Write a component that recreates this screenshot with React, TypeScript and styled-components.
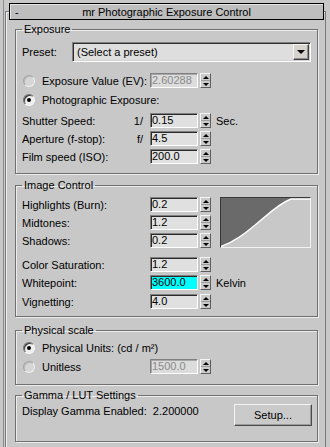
import React from 'react';
import styled, { createGlobalStyle } from 'styled-components';

const GlobalStyle = createGlobalStyle`
  html, body {
    margin: 0;
    padding: 0;
    background: #c8c8c8;
  }
  body {
    font-family: "Liberation Sans", Arial, sans-serif;
    font-size: 11px;
    color: #000;
  }
`;

const Page = styled.div`
  width: 330px;
  height: 447px;
  overflow: hidden;
  box-sizing: border-box;
  background: #c8c8c8;
  padding: 11px 4px 0 5px;
  box-shadow: inset 3px 0 0 #c8c8c8, inset 4px 0 0 #8c8c8c;
`;

const Rollout = styled.div`
  height: 436px;
  box-sizing: border-box;
  border: 1px solid #7a7a7a;
  border-bottom: none;
  box-shadow: inset 1px 1px 0 #eeeeee;
`;

const TitleBar = styled.div`
  margin: -9px 1px 0 3px;
  height: 17px;
  box-sizing: border-box;
  border: 1px solid #000;
  background: #bebebe;
  box-shadow: inset 1px 1px 0 #e4e4e4;
  display: grid;
  grid-template-columns: 24px 1fr 24px;
  align-items: center;
  line-height: 14px;
`;

const Collapse = styled.span`
  padding-left: 5px;
`;

const TitleText = styled.span`
  text-align: center;
`;

const Group = styled.fieldset<{ $mt: number; $pt: number; $pb: number }>`
  margin: ${p => p.$mt}px 7px 0 9px;
  padding: ${p => p.$pt}px 6px ${p => p.$pb}px 6px;
  border: 1px solid #707070;
  box-shadow: inset 1px 1px 0 #ececec, 1px 1px 0 #ececec;
  min-inline-size: 0;
`;

const Legend = styled.legend`
  padding: 0 2px;
  line-height: 14px;
  font-size: 11px;
`;

const Row = styled.div<{ $mt?: number; $h?: number }>`
  display: flex;
  align-items: center;
  height: ${p => p.$h ?? 17}px;
  margin-top: ${p => p.$mt ?? 0}px;
  line-height: 14px;
  white-space: pre;
`;

const PresetLabel = styled.span`
  width: 50px;
  flex: none;
`;

const Select = styled.div`
  flex: 1;
  height: 20px;
  box-sizing: border-box;
  display: flex;
  align-items: center;
  padding: 0 1px 0 3px;
  border: 1px solid;
  border-color: #808080 #ffffff #ffffff #808080;
  box-shadow: inset 1px 1px 0 #2e2e2e, inset -1px -1px 0 #d4d4d4;
  background: #dedede;
`;

const SelectText = styled.span`
  flex: 1;
  padding-left: 1px;
`;

const ArrowButton = styled.span`
  width: 16px;
  height: 16px;
  box-sizing: border-box;
  display: flex;
  align-items: center;
  justify-content: center;
  background: #d6d3cd;
  border: 1px solid;
  border-color: #f6f6f6 #404040 #404040 #f6f6f6;
  box-shadow: inset -1px -1px 0 #8e8e8e;
  &::after {
    content: '';
    border-left: 4px solid transparent;
    border-right: 4px solid transparent;
    border-top: 4px solid #000;
  }
`;

const Label = styled.span`
  width: 128px;
  flex: none;
  display: flex;
  align-items: center;
`;

const Prefix = styled.span`
  margin-left: auto;
  padding-right: 7px;
`;

const Radio = styled.span<{ $checked?: boolean }>`
  width: 12px;
  height: 12px;
  flex: none;
  margin: 0 7px 0 1px;
  border-radius: 50%;
  box-sizing: border-box;
  display: flex;
  align-items: center;
  justify-content: center;
  border: 1px solid;
  border-color: ${p => (p.$checked ? '#6e6e6e #f6f6f6 #f6f6f6 #6e6e6e' : '#a4a4a4 #f0f0f0 #f0f0f0 #a4a4a4')};
  background: ${p => (p.$checked ? '#efefef' : '#d6d6d6')};
  box-shadow: inset 1px 1px 0 ${p => (p.$checked ? '#333333' : '#bcbcbc')};
  &::after {
    content: '';
    display: ${p => (p.$checked ? 'block' : 'none')};
    width: 4px;
    height: 4px;
    border-radius: 50%;
    background: #000;
  }
`;

const Field = styled.span<{ $disabled?: boolean; $bg?: string }>`
  width: 48px;
  height: 15px;
  flex: none;
  box-sizing: border-box;
  padding-left: 1px;
  line-height: 13px;
  border: 1px solid;
  border-color: #808080 #ffffff #ffffff #808080;
  box-shadow: inset 1px 1px 0 ${p => (p.$disabled ? '#a8a8a8' : '#2a2a2a')};
  background: ${p => p.$bg ?? (p.$disabled ? '#dcdcdc' : '#e0e0e0')};
  color: ${p => (p.$disabled ? '#8a8a8a' : '#000')};
  overflow: hidden;
`;

const Spin = styled.span`
  width: 11px;
  height: 15px;
  flex: none;
  margin-left: 2px;
  box-sizing: border-box;
  display: flex;
  flex-direction: column;
  border: 1px solid;
  border-color: #f6f6f6 #5e5e5e #5e5e5e #f6f6f6;
  background: #cbcbcb;
`;

const SpinHalf = styled.span<{ $down?: boolean }>`
  flex: 1;
  display: flex;
  align-items: center;
  justify-content: center;
  border-top: ${p => (p.$down ? '1px solid #9c9c9c' : 'none')};
  &::after {
    content: '';
    border-left: 3px solid transparent;
    border-right: 3px solid transparent;
    ${p => (p.$down ? 'border-top: 3px solid #000;' : 'border-bottom: 3px solid #000;')}
  }
`;

const Unit = styled.span`
  margin-left: 5px;
`;

const ToneBlock = styled.div`
  display: flex;
  align-items: flex-start;
`;

const ToneRows = styled.div`
  display: flex;
  flex-direction: column;
`;

const Curve = styled.div`
  width: 91px;
  height: 51px;
  margin: 1px 0 0 9px;
  box-sizing: border-box;
  border: 1px solid;
  border-color: #383838 #f2f2f2 #f2f2f2 #383838;
  background: #c8c8c8;
  svg {
    display: block;
  }
`;

const GammaRow = styled.div`
  display: flex;
  align-items: flex-start;
  line-height: 14px;
  white-space: pre;
`;

const Button = styled.span`
  margin-left: auto;
  margin-right: -1px;
  width: 78px;
  height: 22px;
  box-sizing: border-box;
  display: flex;
  align-items: center;
  justify-content: center;
  border: 1px solid;
  border-color: #f4f4f4 #4a4a4a #4a4a4a #f4f4f4;
  box-shadow: inset -1px -1px 0 #9a9a9a;
  background: #cacaca;
`;

const Spinner = () => (
  <Spin>
    <SpinHalf />
    <SpinHalf $down />
  </Spin>
);

type ParamProps = {
  label: string;
  value: string;
  prefix?: string;
  unit?: string;
  mt?: number;
  bg?: string;
};

const Param = ({ label, value, prefix, unit, mt, bg }: ParamProps) => (
  <Row $mt={mt}>
    <Label>
      {label}
      {prefix && <Prefix>{prefix}</Prefix>}
    </Label>
    <Field $bg={bg}>{value}</Field>
    <Spinner />
    {unit && <Unit>{unit}</Unit>}
  </Row>
);

const ToneCurve = () => (
  <Curve>
    <svg width="89" height="49" viewBox="0 0 89 49">
      <path d="M0,0 L0,49 C14,44 24,36 36,26 C48,16 58,6 70,1 L89,1 L89,0 Z" fill="#6a6a6a" />
      <path d="M0,48.5 C14,43.5 24,35.5 36,25.5 C48,15.5 58,5.5 70,1 L89,1" fill="none" stroke="#ffffff" strokeWidth="1.6" />
    </svg>
  </Curve>
);

export default function App() {
  return (
    <>
      <GlobalStyle />
      <Page>
        <Rollout>
          <TitleBar>
            <Collapse>-</Collapse>
            <TitleText>mr Photographic Exposure Control</TitleText>
            <span />
          </TitleBar>

          <Group $mt={2} $pt={6} $pb={8}>
            <Legend>Exposure</Legend>
            <Row $h={20}>
              <PresetLabel>Preset:</PresetLabel>
              <Select>
                <SelectText>(Select a preset)</SelectText>
                <ArrowButton />
              </Select>
            </Row>
            <Row $mt={10}>
              <Label>
                <Radio />
                Exposure Value (EV):
              </Label>
              <Field $disabled>2.60288</Field>
              <Spinner />
            </Row>
            <Row $mt={2}>
              <Radio $checked />
              Photographic Exposure:
            </Row>
            <Param mt={4} label="Shutter Speed:" prefix="1/" value="0.15" unit="Sec." />
            <Param mt={1} label="Aperture (f-stop):" prefix="f/" value="4.5" />
            <Param mt={1} label="Film speed (ISO):" value="200.0" />
          </Group>

          <Group $mt={4} $pt={4} $pb={6}>
            <Legend>Image Control</Legend>
            <ToneBlock>
              <ToneRows>
                <Param label="Highlights (Burn):" value="0.2" />
                <Param mt={1} label="Midtones:" value="1.2" />
                <Param mt={1} label="Shadows:" value="0.2" />
              </ToneRows>
              <ToneCurve />
            </ToneBlock>
            <Param mt={7} label="Color Saturation:" value="1.2" />
            <Param mt={1} label="Whitepoint:" value="3600.0" unit="Kelvin" bg="#00ffff" />
            <Param mt={2} label="Vignetting:" value="4.0" />
          </Group>

          <Group $mt={6} $pt={2} $pb={9}>
            <Legend>Physical scale</Legend>
            <Row>
              <Radio $checked />
              Physical Units: (cd / m²)
            </Row>
            <Row $mt={2}>
              <Label>
                <Radio />
                Unitless
              </Label>
              <Field $disabled>1500.0</Field>
              <Spinner />
            </Row>
          </Group>

          <Group $mt={3} $pt={2} $pb={15}>
            <Legend>Gamma / LUT Settings</Legend>
            <GammaRow>
              <span>Display Gamma Enabled:  2.200000</span>
              <Button>Setup...</Button>
            </GammaRow>
          </Group>
        </Rollout>
      </Page>
    </>
  );
}
